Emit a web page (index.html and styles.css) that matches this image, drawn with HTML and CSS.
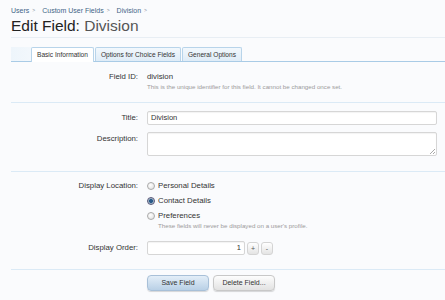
FILE: index.html
```html
<!DOCTYPE html>
<html>
<head>
<meta charset="utf-8">
<link rel="stylesheet" href="styles.css">
</head>
<body>
<div class="page">
  <div class="crumbs"><a>Users</a><span class="sep">&gt;</span><a>Custom User Fields</a><span class="sep">&gt;</span><a>Division</a><span class="sep">&gt;</span></div>
  <h1 class="title">Edit Field: <span class="sub">Division</span></h1>
  <div class="tabs">
    <span class="tab active">Basic Information</span>
    <span class="tab">Options for Choice Fields</span>
    <span class="tab">General Options</span>
  </div>
  <div class="form">
    <div class="block">
      <div class="row">
        <div class="label">Field ID:</div>
        <div class="value">
          <div class="text">division</div>
          <div class="hint">This is the unique identifier for this field. It cannot be changed once set.</div>
        </div>
      </div>
    </div>
    <div class="block b2">
      <div class="row">
        <div class="label lab-in">Title:</div>
        <div class="value"><div class="input">Division</div></div>
      </div>
      <div class="row r-desc">
        <div class="label lab-in">Description:</div>
        <div class="value"><div class="textarea"><span class="grip"></span></div></div>
      </div>
    </div>
    <div class="block b3">
      <div class="row">
        <div class="label lab-radio">Display Location:</div>
        <div class="value">
          <div class="radio"><span class="dot"></span>Personal Details</div>
          <div class="radio"><span class="dot on"></span>Contact Details</div>
          <div class="radio"><span class="dot"></span>Preferences</div>
          <div class="hint hint2">These fields will never be displayed on a user's profile.</div>
        </div>
      </div>
      <div class="row r-order">
        <div class="label lab-in">Display Order:</div>
        <div class="value spin">
          <div class="input num">1</div>
          <span class="sbtn">+</span><span class="sbtn">-</span>
        </div>
      </div>
    </div>
    <div class="buttons">
      <span class="btn primary">Save Field</span>
      <span class="btn">Delete Field...</span>
    </div>
  </div>
</div>
</body>
</html>
```
FILE: styles.css
```css
html, body { margin: 0; padding: 0; }
body {
  background: #fafbfd;
  font-family: "Liberation Sans", Arial, sans-serif;
  color: #444;
  width: 445px;
  height: 300px;
  overflow: hidden;
}
.page { padding: 6px 0 0 11px; }
.crumbs {
  font-size: 7px;
  color: #3f6486;
  height: 9px;
  line-height: 9px;
  display: flex;
  align-items: center;
}
.crumbs a { color: #3f6486; }
.crumbs .sep { margin: 0 7px 0 3px; font-size: 5px; color: #7a8a99; }
.title {
  margin: 2px 0 0 0;
  font-size: 15.5px;
  font-weight: normal;
  color: #222;
  line-height: 18px;
  height: 20px;
  border-bottom: 1px solid #e8eef4;
  padding-bottom: 0;
}
.title .sub { color: #555; }
.tabs {
  margin-top: 9px;
  height: 14px;
  display: flex;
  padding-left: 20px;
  border-bottom: 1px solid #a9cbe6;
  background: linear-gradient(90deg, #eef5fb 0, #fafcfe 60px, #fafbfd 200px);
}
.tab {
  font-size: 6.6px;
  color: #333;
  height: 13px;
  line-height: 14px;
  padding: 0 5px;
  margin-right: 1px;
  border: 1px solid #b8d4ea;
  border-bottom: none;
  border-radius: 2px 2px 0 0;
  background: linear-gradient(#f2f8fd, #dfecf7);
}
.tab.active {
  background: #fff;
  height: 14px;
  margin-bottom: -1px;
}
.block {
  border-bottom: 1px solid #dbeaf6;
  padding: 10px 0 11px;
}
.b2 { padding: 8px 0 15px; }
.b3 { padding: 6px 0 14px; }
.row {
  display: grid;
  grid-template-columns: 127px 1fr;
  column-gap: 9px;
  padding-right: 8px;
}
.label {
  text-align: right;
  font-size: 7.8px;
  line-height: 10px;
  color: #333;
}
.lab-in { line-height: 13px; }
.lab-radio { line-height: 15px; }
.value { font-size: 7.8px; color: #333; }
.text { line-height: 10px; }
.hint { font-size: 6.2px; color: #9a9a9a; line-height: 9px; }
.input {
  height: 12px;
  line-height: 12px;
  border: 1px solid #d6d6d6;
  border-radius: 2px;
  background: #fff;
  padding: 0 3px;
  font-size: 7.5px;
  box-shadow: inset 0 1px 1px rgba(0,0,0,0.05);
}
.r-desc { margin-top: 7px; }
.textarea {
  position: relative;
  height: 22px;
  border: 1px solid #d6d6d6;
  border-radius: 2px;
  background: #fff;
  box-shadow: inset 0 1px 1px rgba(0,0,0,0.05);
}
.grip {
  position: absolute;
  right: 1px;
  bottom: 1px;
  width: 5px;
  height: 5px;
  background: linear-gradient(135deg, transparent 45%, #aaa 45%, #aaa 55%, transparent 55%, transparent 75%, #aaa 75%, #aaa 85%, transparent 85%);
}
.radio {
  display: flex;
  align-items: center;
  height: 15px;
  line-height: 15px;
  font-size: 7.8px;
}
.dot {
  width: 8px;
  height: 8px;
  border-radius: 50%;
  border: 1px solid #aaa;
  background: radial-gradient(circle at 40% 35%, #fff, #ddd);
  margin-right: 3px;
  box-sizing: border-box;
}
.dot.on {
  background: radial-gradient(circle, #2a5a8a 0 1.6px, #8ab 2.2px, #dde 3.5px);
  border-color: #557;
}
.hint2 { padding-left: 11px; margin-top: -2px; }
.r-order { margin-top: 11px; }
.spin { display: flex; align-items: center; }
.num { width: 90px; text-align: right; }
.sbtn {
  width: 10px;
  height: 11px;
  line-height: 11px;
  text-align: center;
  font-size: 7px;
  color: #555;
  margin-left: 2px;
  border: 1px solid #d4d4d4;
  border-radius: 3px;
  background: linear-gradient(#fff, #e4e4e4);
}
.buttons {
  display: flex;
  padding: 5px 0 0 136px;
  gap: 4px;
}
.btn {
  width: 60px;
  height: 14px;
  line-height: 14px;
  text-align: center;
  font-size: 7px;
  color: #333;
  border: 1px solid #c8c8c8;
  border-radius: 4px;
  background: linear-gradient(#fdfdfd, #e2e2e2);
  box-shadow: 0 1px 1px rgba(0,0,0,0.15);
}
.btn.primary {
  background: linear-gradient(#e3eef8, #b9d0e6);
  border-color: #a8c0d8;
}
```
